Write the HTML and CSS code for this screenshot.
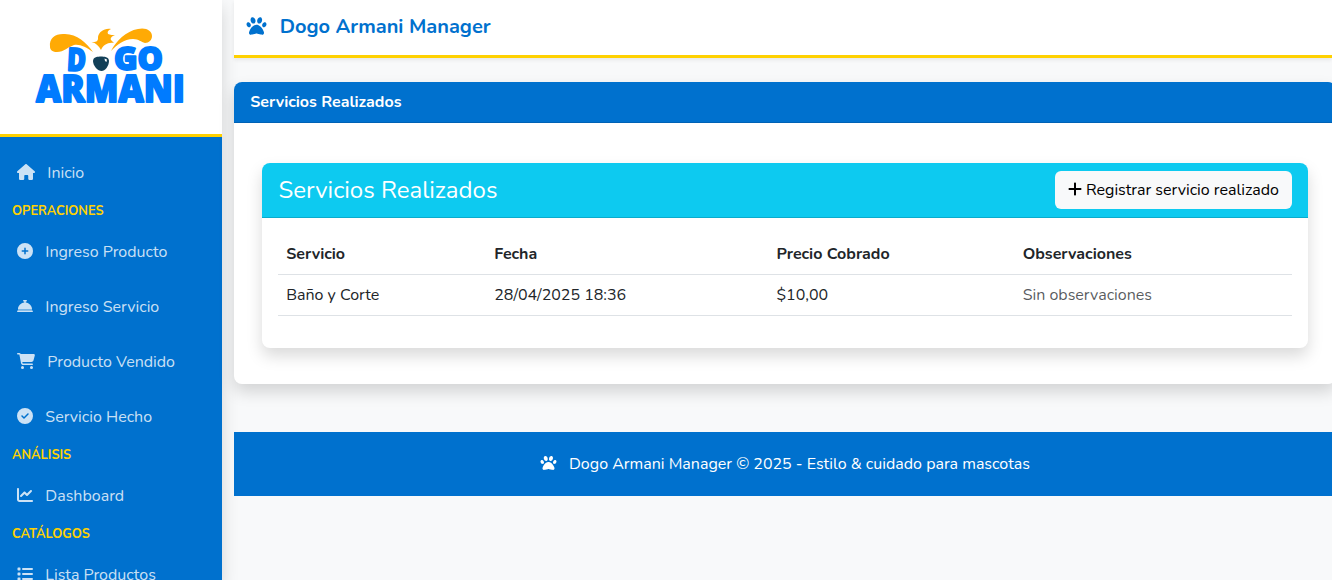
FILE: index.html
```html
<!DOCTYPE html>
<html lang="es">
<head>
<meta charset="utf-8">
<title>Dogo Armani Manager</title>
<link rel="stylesheet" href="styles.css">
</head>
<body>
<svg class="sprite" aria-hidden="true">
  <symbol id="paw" viewBox="0 0 512 512"><path d="M226.500 92.900c14.300 42.900-.3 86.200-32.600 96.800s-70.100-15.600-84.400-58.500s.3-86.200 32.600-96.800s70.100 15.600 84.400 58.500zM100.400 198.600c18.900 32.400 14.300 70.100-10.200 84.100s-59.700-.9-78.500-33.300S-2.700 179.300 21.800 165.300s59.700 .9 78.500 33.300zM69.200 401.200C121.600 259.900 214.700 224 256 224s134.400 35.900 186.800 177.200c3.600 9.700 5.200 20.100 5.200 30.500v1.600c0 25.800-20.900 46.700-46.700 46.700c-11.500 0-22.900-1.400-34-4.200l-88-22c-15.300-3.800-31.300-3.800-46.600 0l-88 22c-11.100 2.800-22.500 4.200-34 4.200C84.900 480 64 459.100 64 433.300v-1.600c0-10.400 1.600-20.800 5.200-30.500zM421.800 282.700c-24.500-14-29.100-51.700-10.200-84.100s54-47.300 78.500-33.300s29.100 51.700 10.200 84.100s-54 47.300-78.500 33.300zM310.100 189.700c-32.300-10.600-46.900-53.900-32.600-96.800s52.100-69.100 84.400-58.500s46.900 53.900 32.600 96.800s-52.100 69.100-84.400 58.500z"/></symbol>
</svg>
<div class="app">
  <aside class="sidebar">
    <div class="brand">
      <svg class="logo" viewBox="0 0 160 84" aria-label="Dogo Armani">
        <g class="ears">
          <path d="M20 21C19 12 25 8 33 8c13-1 23 8 30 18C56 21 50 18 44 19c-6 2-10 7-17 7-4 0-7-2-7-5z"/>
          <path d="M81 25C86 15 96 5 108 3c8-2 14 2 14 7 0 4-3 7-7 7-4-1-6-4-12-4-9 0-16 6-22 12z"/>
          <path d="M61.500 16c4 0 7 0 6.500-5 1-5 6-9 13-8-3 1-4 3-3 5 2 1 5 1 7 1-3 1-5 3-4 5l3 3c-6-1-11 2-13 7-2-4-5-7-9.500-8z"/>
        </g>
        <g class="letters">
          <text x="37" y="45" textLength="19" lengthAdjust="spacingAndGlyphs" class="big" transform="rotate(3 46 34)">D</text>
          <text x="84" y="43.500" textLength="49" lengthAdjust="spacingAndGlyphs" class="big">GO</text>
          <text x="6" y="76" textLength="149" lengthAdjust="spacingAndGlyphs" class="wide">ARMANI</text>
        </g>
        <path class="nose" d="M63 35c0-4 5-4.500 8-4.500s8 .5 8 4.500c0 5-4 10-7.500 10S63 40 63 35z"/>
        <path class="shine" d="M74.500 32.500l2.500 1-.5 2.500-1.500-1z"/>
      </svg>
    </div>
    <nav class="menu">
      <a class="item"><svg class="icon w18" viewBox="0 0 576 512"><path d="M575.800 255.500c0 18-15 32.100-32 32.100l-32 0 .7 160.200c0 2.700-.2 5.400-.5 8.100l0 16.200c0 22.100-17.900 40-40 40l-72 0c-22.100 0-40-17.900-40-40l0-88c0-17.700-14.300-32-32-32l-64 0c-17.700 0-32 14.300-32 32l0 88c0 22.100-17.900 40-40 40l-88 0c-22.100 0-40-17.900-40-40l0-184.600-32 0c-18 0-32-14-32-32.100 0-9 3-17 10-24L266.400 8c7-7 15-8 22-8s15 2 21 7L564.800 231.500c8 7 12 15 11 24z"/></svg><span>Inicio</span></a>
      <h6 class="section">OPERACIONES</h6>
      <a class="item"><svg class="icon" viewBox="0 0 512 512"><path d="M256 512A256 256 0 1 0 256 0a256 256 0 1 0 0 512zM232 344l0-64-64 0c-13.300 0-24-10.700-24-24s10.700-24 24-24l64 0 0-64c0-13.300 10.700-24 24-24s24 10.700 24 24l0 64 64 0c13.300 0 24 10.700 24 24s-10.700 24-24 24l-64 0 0 64c0 13.300-10.700 24-24 24s-24-10.700-24-24z"/></svg><span>Ingreso Producto</span></a>
      <a class="item"><svg class="icon" viewBox="0 0 512 512"><path d="M216 64c-13.300 0-24 10.700-24 24s10.700 24 24 24l16 0 0 33.300C119.600 157.200 32 252.400 32 352l448 0c0-99.600-87.600-194.800-200-206.700l0-33.300 16 0c13.300 0 24-10.700 24-24s-10.700-24-24-24l-80 0z"/><path opacity=".6" d="M32 352h448v48H32z"/><path d="M24 400c-13.300 0-24 10.700-24 24s10.700 24 24 24l464 0c13.300 0 24-10.700 24-24s-10.700-24-24-24z"/></svg><span>Ingreso Servicio</span></a>
      <a class="item"><svg class="icon w18" viewBox="0 0 576 512"><path d="M0 24C0 10.700 10.700 0 24 0l45.500 0c22 0 41.500 12.800 50.600 32l411 0c26.300 0 45.500 25 38.600 50.400l-41 152.300c-8.500 31.400-37 53.300-69.500 53.300l-288.500 0 5.400 28.500c2.200 11.300 12.100 19.500 23.600 19.500L488 336c13.300 0 24 10.700 24 24s-10.700 24-24 24l-288.300 0c-34.600 0-64.300-24.600-70.700-58.500L77.400 54.500c-.7-3.800-4-6.500-7.900-6.500L24 48C10.700 48 0 37.300 0 24zM128 464a48 48 0 1 1 96 0 48 48 0 1 1-96 0zm336-48a48 48 0 1 1 0 96 48 48 0 1 1 0-96z"/></svg><span>Producto Vendido</span></a>
      <a class="item"><svg class="icon" viewBox="0 0 512 512"><path d="M256 512A256 256 0 1 0 256 0a256 256 0 1 0 0 512zM369 209L241 337c-9.400 9.400-24.600 9.400-33.900 0l-64-64c-9.400-9.400-9.400-24.600 0-33.900s24.600-9.400 33.900 0l47 47L335 175c9.400-9.400 24.600-9.400 33.900 0s9.400 24.600 0 33.900z"/></svg><span>Servicio Hecho</span></a>
      <h6 class="section">ANÁLISIS</h6>
      <a class="item"><svg class="icon" viewBox="0 0 512 512"><path d="M64 64c0-17.700-14.300-32-32-32S0 46.300 0 64L0 400c0 44.200 35.800 80 80 80l400 0c17.700 0 32-14.300 32-32s-14.300-32-32-32L80 416c-8.800 0-16-7.200-16-16L64 64zm406.600 86.600c12.500-12.500 12.500-32.800 0-45.300s-32.800-12.500-45.300 0L320 210.700l-57.400-57.400c-12.500-12.500-32.800-12.500-45.300 0l-112 112c-12.500 12.500-12.500 32.800 0 45.300s32.800 12.500 45.300 0L240 221.300l57.400 57.400c12.500 12.500 32.800 12.500 45.300 0l128-128z"/></svg><span>Dashboard</span></a>
      <h6 class="section">CATÁLOGOS</h6>
      <a class="item"><svg class="icon" viewBox="0 0 512 512"><path d="M40 48h48a24 24 0 0 1 24 24v48a24 24 0 0 1-24 24H40a24 24 0 0 1-24-24V72a24 24 0 0 1 24-24zM192 64a32 32 0 0 0 0 64h288a32 32 0 0 0 0-64zM192 224a32 32 0 0 0 0 64h288a32 32 0 0 0 0-64zM192 384a32 32 0 0 0 0 64h288a32 32 0 0 0 0-64zM40 208h48a24 24 0 0 1 24 24v48a24 24 0 0 1-24 24H40a24 24 0 0 1-24-24v-48a24 24 0 0 1 24-24zM40 368h48a24 24 0 0 1 24 24v48a24 24 0 0 1-24 24H40a24 24 0 0 1-24-24v-48a24 24 0 0 1 24-24z"/></svg><span>Lista Productos</span></a>
    </nav>
  </aside>
  <main class="main">
    <header class="topbar"><svg class="icon paw-lg"><use href="#paw"/></svg><span class="title">Dogo Armani Manager</span></header>
    <section class="card outer">
      <div class="card-head"><span>Servicios Realizados</span></div>
      <div class="card-body">
        <div class="card inner">
          <div class="inner-head">
            <h4 class="inner-title">Servicios Realizados</h4>
            <button class="btn"><svg class="icon plus" viewBox="0 0 448 512"><path d="M256 80c0-17.700-14.300-32-32-32s-32 14.300-32 32v144H48c-17.700 0-32 14.300-32 32s14.300 32 32 32h144v144c0 17.700 14.300 32 32 32s32-14.300 32-32V288h144c17.700 0 32-14.300 32-32s-14.300-32-32-32H256z"/></svg><span>Registrar servicio realizado</span></button>
          </div>
          <div class="table-wrap">
            <table class="table">
              <colgroup><col class="c1"><col class="c2"><col class="c3"><col></colgroup>
              <thead><tr><th>Servicio</th><th>Fecha</th><th>Precio Cobrado</th><th>Observaciones</th></tr></thead>
              <tbody><tr><td>Baño y Corte</td><td>28/04/2025 18:36</td><td>$10,00</td><td class="muted">Sin observaciones</td></tr></tbody>
            </table>
          </div>
        </div>
      </div>
    </section>
    <footer class="footer"><svg class="icon paw-sm"><use href="#paw"/></svg><span>Dogo Armani Manager © 2025 - Estilo &amp; cuidado para mascotas</span></footer>
  </main>
</div>
</body>
</html>
```
FILE: styles.css
```css
* { box-sizing: border-box; }
body { margin: 0; background: #f8f9fa; color: #212529; font: 16px/24px Nunito, Lato, sans-serif; overflow: hidden; }
.sprite { display: none; }
.app { display: flex; height: 580px; overflow: hidden; }
.icon { width: 16px; height: 16px; fill: currentColor; flex: none; }
.w18 { width: 18px; }
span { white-space: nowrap; }

.sidebar { width: 222px; flex: none; background: #0071ce; box-shadow: 0 8px 16px rgba(0,0,0,.15); }
.brand { height: 137px; background: #fff; border-bottom: 3px solid #ffd100; padding: 26px 0 0 30px; }
.logo { width: 160px; height: 84px; display: block; overflow: visible; }
.ears { fill: #ffaa05; }
.letters { fill: #007bff; stroke: #007bff; stroke-width: 1.8; stroke-linejoin: round; font-family: "Open Sans", sans-serif; font-weight: 800; }
.big { font-size: 32px; }
.wide { font-size: 37px; }
.nose { fill: #123f57; }
.shine { fill: #fff; }
.menu { padding-top: 8px; }
.item { height: 55px; display: flex; align-items: center; gap: 12px; padding-left: 17px; color: rgba(255,255,255,.8); }
.item .icon { margin-bottom: 2px; }
.item span { padding-left: .3px; }
.section { margin: 0; height: 24.2px; padding: 1px 0 0 12px; font-size: 12.8px; line-height: 21px; font-weight: 700; color: #ffd100; }

.main { flex: 1; min-width: 0; padding-left: 12px; }
.topbar { height: 58px; background: #fff; border-bottom: 3px solid #ffd100; box-shadow: 0 2px 4px rgba(0,0,0,.075); display: flex; align-items: center; gap: 12.700px; padding: 0 0 3px 12px; color: #0071ce; font-size: 20px; font-weight: 700; }
.title { padding-top: 2px; }
.paw-lg { width: 21px; height: 20px; }
.card { background: #fff; border-radius: 8px; box-shadow: 0 8px 16px rgba(0,0,0,.15); }
.outer { margin: 24px -4px 0 0; height: 302px; }
.card-head { height: 41px; padding: 8px 16.2px; line-height: 24px; background: #0071ce; color: #fff; font-weight: 700; border-bottom: 1px solid #0062b5; border-radius: 8px 8px 0 0; }
.card-body { padding: 40px 28px 36px; }
.inner { height: 185px; }
.inner-head { height: 55px; padding: 0 16px 0 16.4px; display: flex; align-items: center; justify-content: space-between; background: #0dcaf0; color: #fff; border-bottom: 1px solid #0aabcc; border-radius: 8px 8px 0 0; }
.inner-title { margin: 0; font-size: 24px; line-height: 29px; font-weight: 400; }
.btn { width: 237px; height: 38px; display: flex; align-items: center; gap: 4px; padding: 0 0 0 13px; border: 0; border-radius: 6px; background: #f8f9fa; color: #000; font: inherit; }
.plus { width: 14px; margin-bottom: 2px; }
.table-wrap { padding: 16px; }
.table { width: 100%; table-layout: fixed; border-collapse: separate; border-spacing: 0; }
.c1 { width: 208px; }
.c2 { width: 282.300px; }
.c3 { width: 246.200px; }
th, td { padding: 8px 8px 8px 8.2px; height: 41px; text-align: left; border-bottom: 1px solid #dee2e6; font-weight: 400; }
th { font-weight: 700; }
.muted { color: rgba(33,37,41,.75); }
.footer { margin-top: 48px; height: 64px; display: flex; align-items: center; gap: 12px; padding-left: 306px; background: #0071ce; color: #fff; }
.paw-sm { width: 17px; margin-bottom: 2px; }
```
